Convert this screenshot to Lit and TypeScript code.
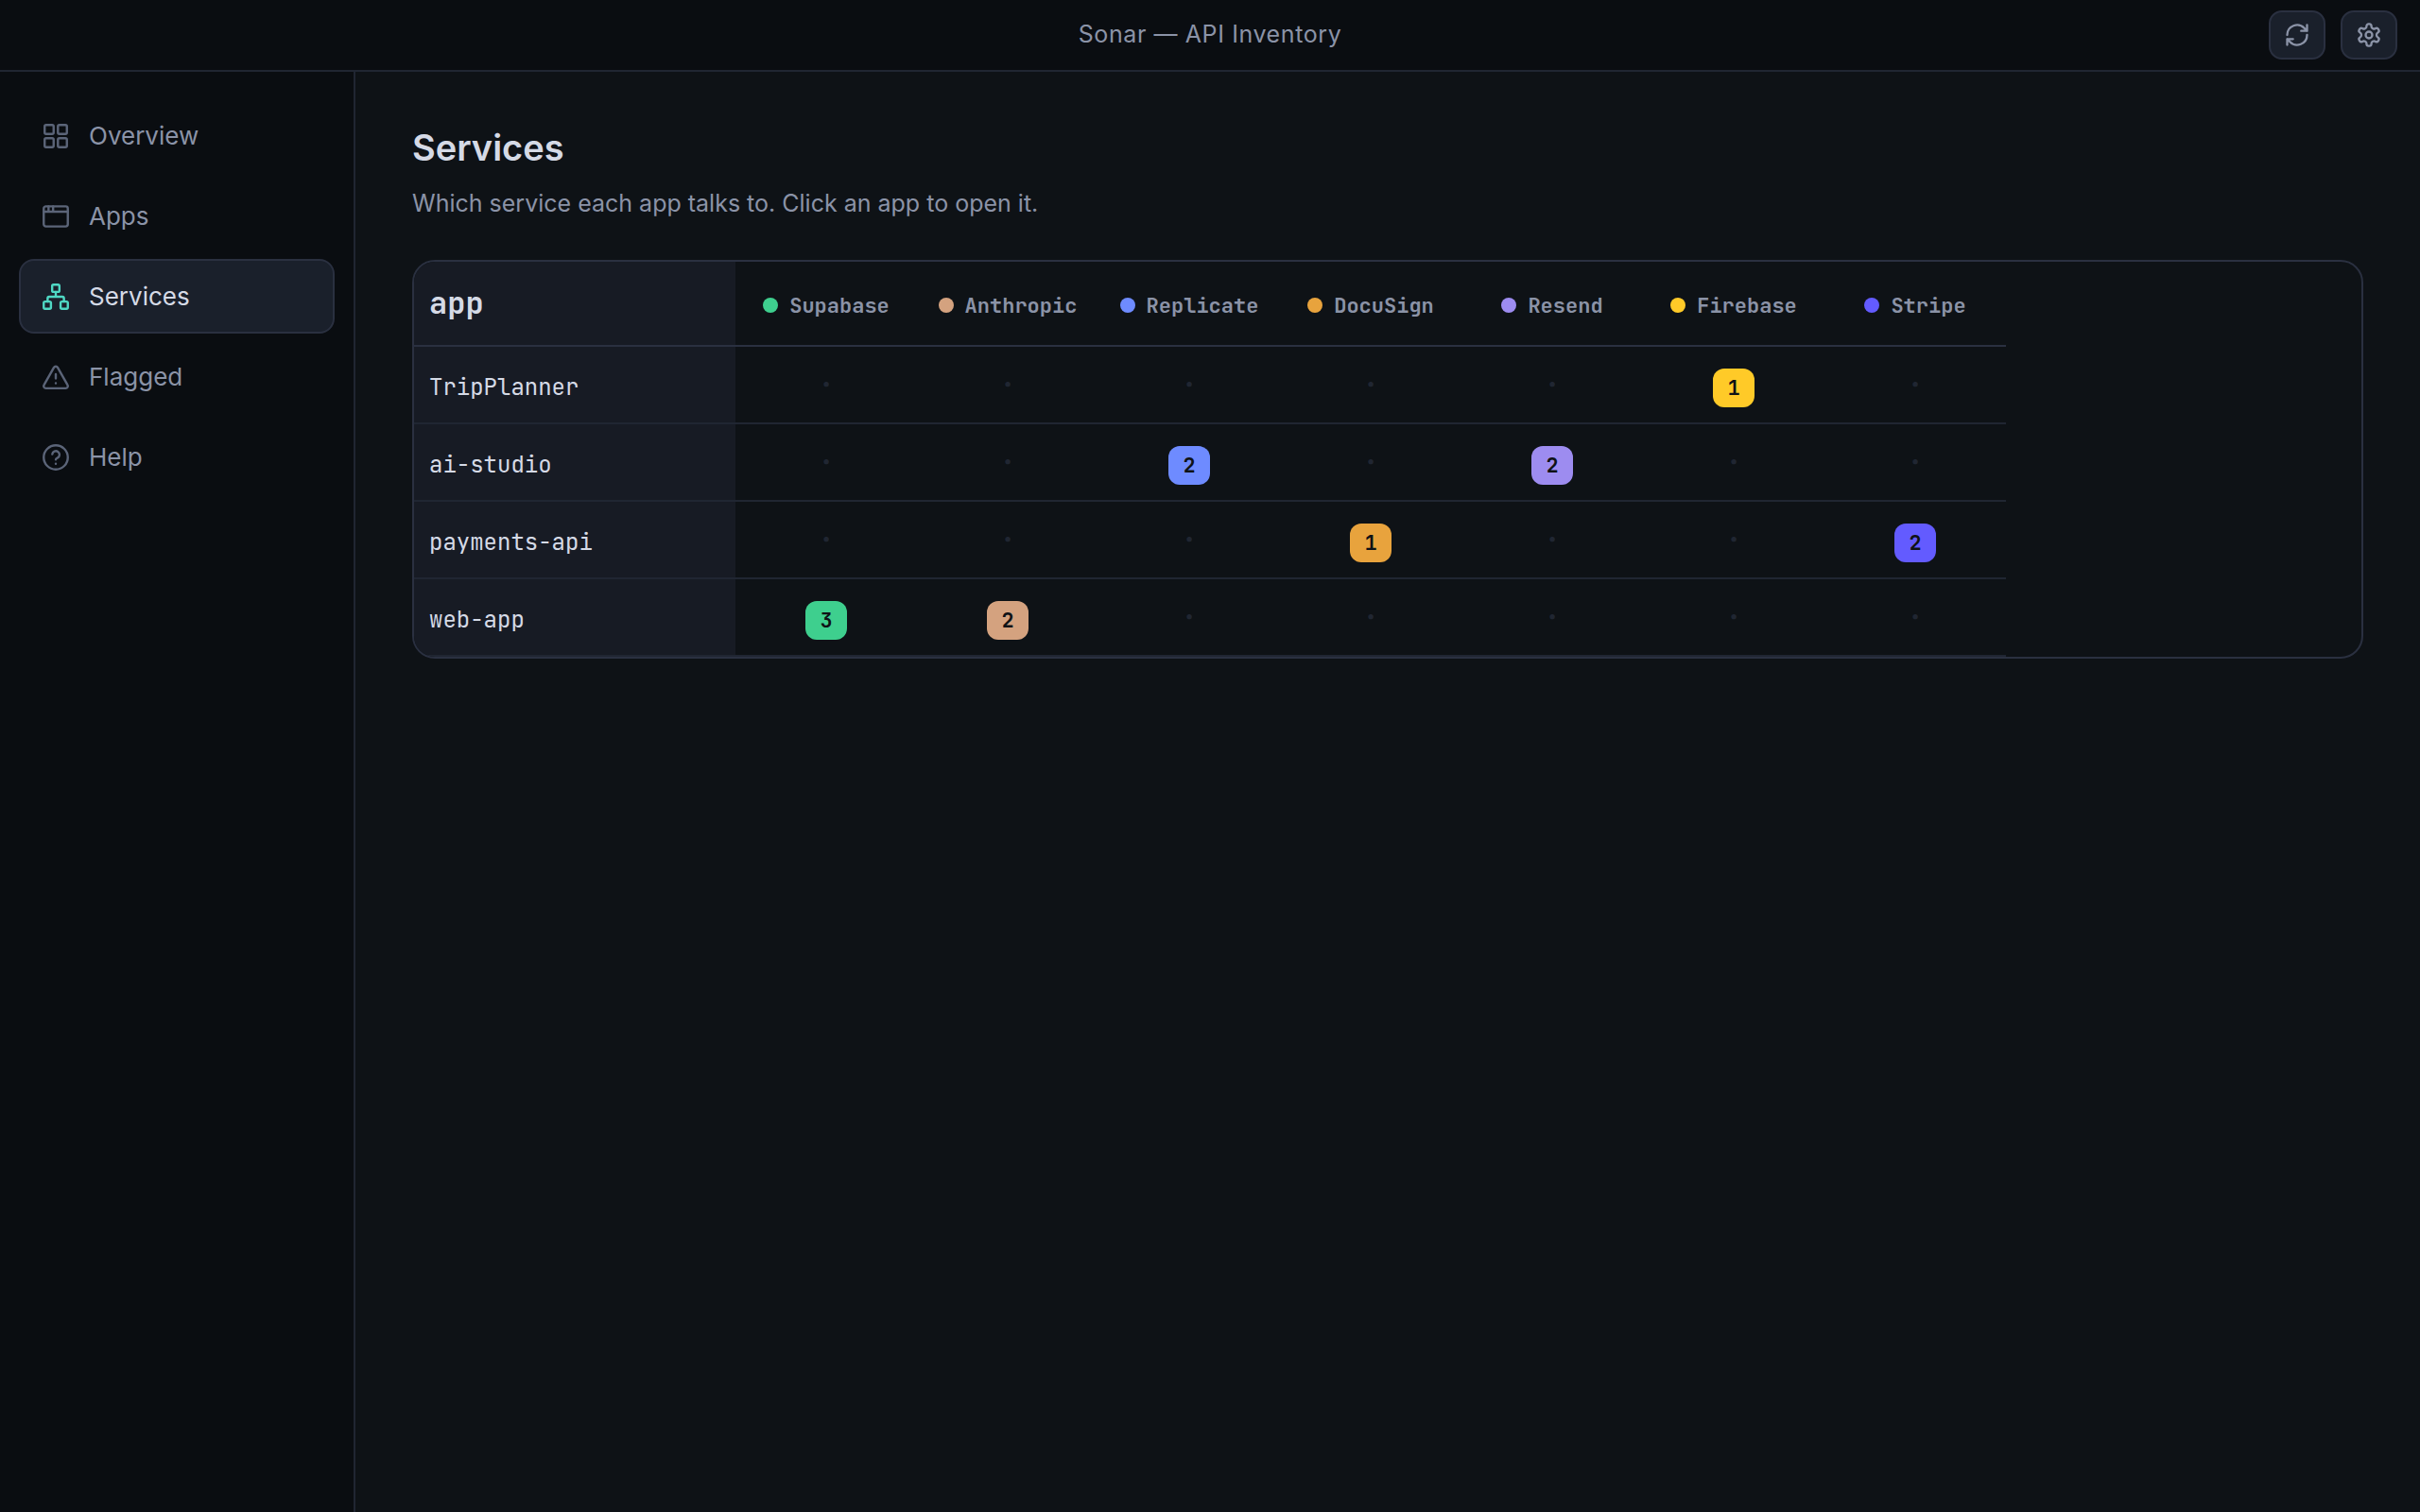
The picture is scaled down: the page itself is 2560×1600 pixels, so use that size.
import { LitElement, html, css, svg } from "lit";
import { customElement, property } from "lit/decorators.js";
import { classMap } from "lit/directives/class-map.js";
import { styleMap } from "lit/directives/style-map.js";

const ICONS = {
  overview: svg`<rect x="3.7" y="3.7" width="6.700" height="6.700" rx="1.100"/><rect x="13.600" y="3.700" width="6.700" height="6.700" rx="1.100"/><rect x="3.700" y="13.600" width="6.700" height="6.700" rx="1.100"/><rect x="13.600" y="13.600" width="6.700" height="6.700" rx="1.100"/>`,
  apps: svg`<rect x="3" y="4.5" width="18" height="15" rx="1.6"/><path d="M3 8.5h18M6.6 4.5v4M10 4.5v4"/>`,
  services: svg`<rect x="9.300" y="3" width="5.400" height="5.400" rx="1"/><rect x="3" y="15.600" width="5.400" height="5.400" rx="1"/><rect x="15.600" y="15.600" width="5.400" height="5.400" rx="1"/><path d="M12 8.400v3.600M5.900 15.600v-2.400A1.200 1.200 0 0 1 7.100 12h9.800a1.200 1.200 0 0 1 1.200 1.200v2.400"/>`,
  flagged: svg`<path d="M10.600 4.900 3.200 17.900A1.650 1.650 0 0 0 4.650 20.400h14.700a1.650 1.650 0 0 0 1.450-2.500L13.400 4.900a1.620 1.620 0 0 0-2.800 0z"/><path d="M12 9.900v3.100M12 16.600v.01"/>`,
  help: svg`<circle cx="12" cy="12" r="9"/><path d="M9.400 9.600a2.700 2.700 0 1 1 4 2.700c-.9.450-1.400.7-1.400 1.300M12 16.700v.01"/>`,
  refresh: svg`<path d="M3 12a9 9 0 0 1 15.500-6.200L21 8.300M21 3v5.300h-5.300M21 12a9 9 0 0 1-15.500 6.200L3 15.700M3 21v-5.300h5.300"/>`,
  settings: svg`<path d="M12.220 2h-.44a2 2 0 0 0-2 2v.18a2 2 0 0 1-1 1.730l-.43.250a2 2 0 0 1-2 0l-.15-.08a2 2 0 0 0-2.730.730l-.22.380a2 2 0 0 0 .730 2.730l.15.100a2 2 0 0 1 1 1.720v.510a2 2 0 0 1-1 1.740l-.15.090a2 2 0 0 0-.73 2.730l.22.380a2 2 0 0 0 2.730.730l.15-.08a2 2 0 0 1 2 0l.43.250a2 2 0 0 1 1 1.730V20a2 2 0 0 0 2 2h.44a2 2 0 0 0 2-2v-.18a2 2 0 0 1 1-1.730l.43-.25a2 2 0 0 1 2 0l.15.080a2 2 0 0 0 2.730-.73l.22-.39a2 2 0 0 0-.73-2.730l-.15-.08a2 2 0 0 1-1-1.740v-.5a2 2 0 0 1 1-1.740l.15-.09a2 2 0 0 0 .730-2.730l-.22-.38a2 2 0 0 0-2.730-.73l-.15.080a2 2 0 0 1-2 0l-.43-.25a2 2 0 0 1-1-1.730V4a2 2 0 0 0-2-2z"/><circle cx="12" cy="12" r="3"/>`,
};

type IconName = keyof typeof ICONS;

@customElement("line-icon")
export class LineIcon extends LitElement {
  @property() name: IconName = "overview";

  static styles = css`
    :host { display: block; flex: none; }
    svg {
      display: block;
      width: 100%;
      height: 100%;
      fill: none;
      stroke: currentColor;
      stroke-width: var(--icon-stroke, 1.7);
      stroke-linecap: round;
      stroke-linejoin: round;
    }
  `;

  render() {
    return html`<svg viewBox="0 0 24 24" aria-hidden="true">${ICONS[this.name]}</svg>`;
  }
}

const NAV: { icon: IconName; label: string }[] = [
  { icon: "overview", label: "Overview" },
  { icon: "apps", label: "Apps" },
  { icon: "services", label: "Services" },
  { icon: "flagged", label: "Flagged" },
  { icon: "help", label: "Help" },
];

const SERVICES = [
  { name: "Supabase", color: "#3ecf8e" },
  { name: "Anthropic", color: "#d4a27f" },
  { name: "Replicate", color: "#6e8bff" },
  { name: "DocuSign", color: "#e8a33d" },
  { name: "Resend", color: "#9d8cf0" },
  { name: "Firebase", color: "#ffca28" },
  { name: "Stripe", color: "#635bff" },
];

const APPS: { name: string; calls: Record<string, number> }[] = [
  { name: "TripPlanner", calls: { Firebase: 1 } },
  { name: "ai-studio", calls: { Replicate: 2, Resend: 2 } },
  { name: "payments-api", calls: { DocuSign: 1, Stripe: 2 } },
  { name: "web-app", calls: { Supabase: 3, Anthropic: 2 } },
];

@customElement("service-matrix")
export class ServiceMatrix extends LitElement {
  static styles = css`
    :host {
      display: block;
      border: 2px solid #2a3040;
      border-radius: 24px;
      overflow: hidden;
      font-family: "JetBrains Mono", "DejaVu Sans Mono", monospace;
    }
    .row {
      display: grid;
      grid-template-columns: 340px repeat(7, 192px);
      width: max-content;
      height: 80px;
      border-bottom: 2px solid #202632;
    }
    .head { height: 88px; border-bottom-color: #2a3040; }
    .cell { display: flex; align-items: center; justify-content: center; }
    .app {
      justify-content: flex-start;
      padding: 5px 0 0 16px;
      background: #171b24;
      color: #d5dae6;
      font-size: 24px;
    }
    .head .app { font-size: 32px; font-weight: 600; padding: 0 0 2px 16px; }
    .service {
      gap: 12px;
      padding-top: 4px;
      color: #8b93a7;
      font-size: 22px;
      font-weight: 600;
    }
    .swatch { width: 16px; height: 16px; border-radius: 50%; }
    .none { color: #202632; font: 700 32px/1 "Inter", sans-serif; }
    .count {
      display: flex;
      align-items: center;
      justify-content: center;
      width: 44px;
      height: 41px;
      margin-top: 7px;
      border-radius: 12px;
      color: #0f1216;
      font-size: 22px;
      font-weight: 600;
    }
  `;

  render() {
    return html`
      <div class="row head">
        <div class="cell app">app</div>
        ${SERVICES.map(
          (s) => html`<div class="cell service">
            <span class="swatch" style=${styleMap({ background: s.color })}></span>${s.name}
          </div>`,
        )}
      </div>
      ${APPS.map(
        (a) => html`<div class="row">
          <div class="cell app">${a.name}</div>
          ${SERVICES.map(
            (s) => html`<div class="cell">
              ${a.calls[s.name]
                ? html`<span class="count" style=${styleMap({ background: s.color })}>${a.calls[s.name]}</span>`
                : html`<span class="none">·</span>`}
            </div>`,
          )}
        </div>`,
      )}
    `;
  }
}

@customElement("app-root")
export class AppRoot extends LitElement {
  static styles = css`
    :host {
      display: grid;
      grid-template: 76px 1fr / 376px 1fr;
      width: 100%;
      height: 100vh;
      box-sizing: border-box;
      background: #0e1216;
      color: #d5dae6;
      font-family: "Inter", sans-serif;
      overflow: hidden;
    }
    * { box-sizing: border-box; }
    .topbar {
      grid-column: 1 / -1;
      display: grid;
      grid-template-columns: 1fr auto 1fr;
      align-items: center;
      padding: 0 24px;
      background: #0a0d11;
      border-bottom: 2px solid #202632;
    }
    .title {
      grid-column: 2;
      margin-top: -2px;
      color: #8b93a7;
      font-size: 25px;
      line-height: 36px;
      letter-spacing: 0.6px;
    }
    .actions { display: flex; justify-content: flex-end; gap: 16px; }
    .action {
      display: flex;
      align-items: center;
      justify-content: center;
      width: 60px;
      height: 52px;
      padding: 0;
      background: #1a202b;
      border: 2px solid #2a3040;
      border-radius: 14px;
      color: #8b93a7;
    }
    .action line-icon { width: 28px; height: 28px; --icon-stroke: 2; }
    .sidebar {
      display: flex;
      flex-direction: column;
      gap: 6px;
      padding: 28px 20px;
      background: #0a0d11;
      border-right: 2px solid #202632;
    }
    .item {
      display: flex;
      align-items: center;
      gap: 18px;
      height: 79px;
      padding: 0 20px;
      border: 2px solid transparent;
      border-radius: 16px;
      color: #8b93a7;
      font-size: 26px;
    }
    .item line-icon { width: 34px; height: 34px; color: #5b6478; }
    .item.active { background: #1a202b; border-color: #2a3040; color: #d5dae6; }
    .item.active line-icon { color: #4fd8c4; }
    .main { padding: 55px 60px; }
    .heading { margin: 0; font-size: 38px; font-weight: 600; line-height: 50px; }
    .lead { margin: 15px 0 41px; font-size: 25px; line-height: 38px; color: #8b93a7; }
  `;

  render() {
    return html`
      <header class="topbar">
        <div class="title">Sonar — API Inventory</div>
        <div class="actions">
          <button class="action" aria-label="Refresh"><line-icon name="refresh"></line-icon></button>
          <button class="action" aria-label="Settings"><line-icon name="settings"></line-icon></button>
        </div>
      </header>
      <nav class="sidebar">
        ${NAV.map(
          (n) => html`<div class=${classMap({ item: true, active: n.icon === "services" })}>
            <line-icon name=${n.icon}></line-icon><span>${n.label}</span>
          </div>`,
        )}
      </nav>
      <main class="main">
        <h1 class="heading">Services</h1>
        <p class="lead">Which service each app talks to. Click an app to open it.</p>
        <service-matrix></service-matrix>
      </main>
    `;
  }
}
